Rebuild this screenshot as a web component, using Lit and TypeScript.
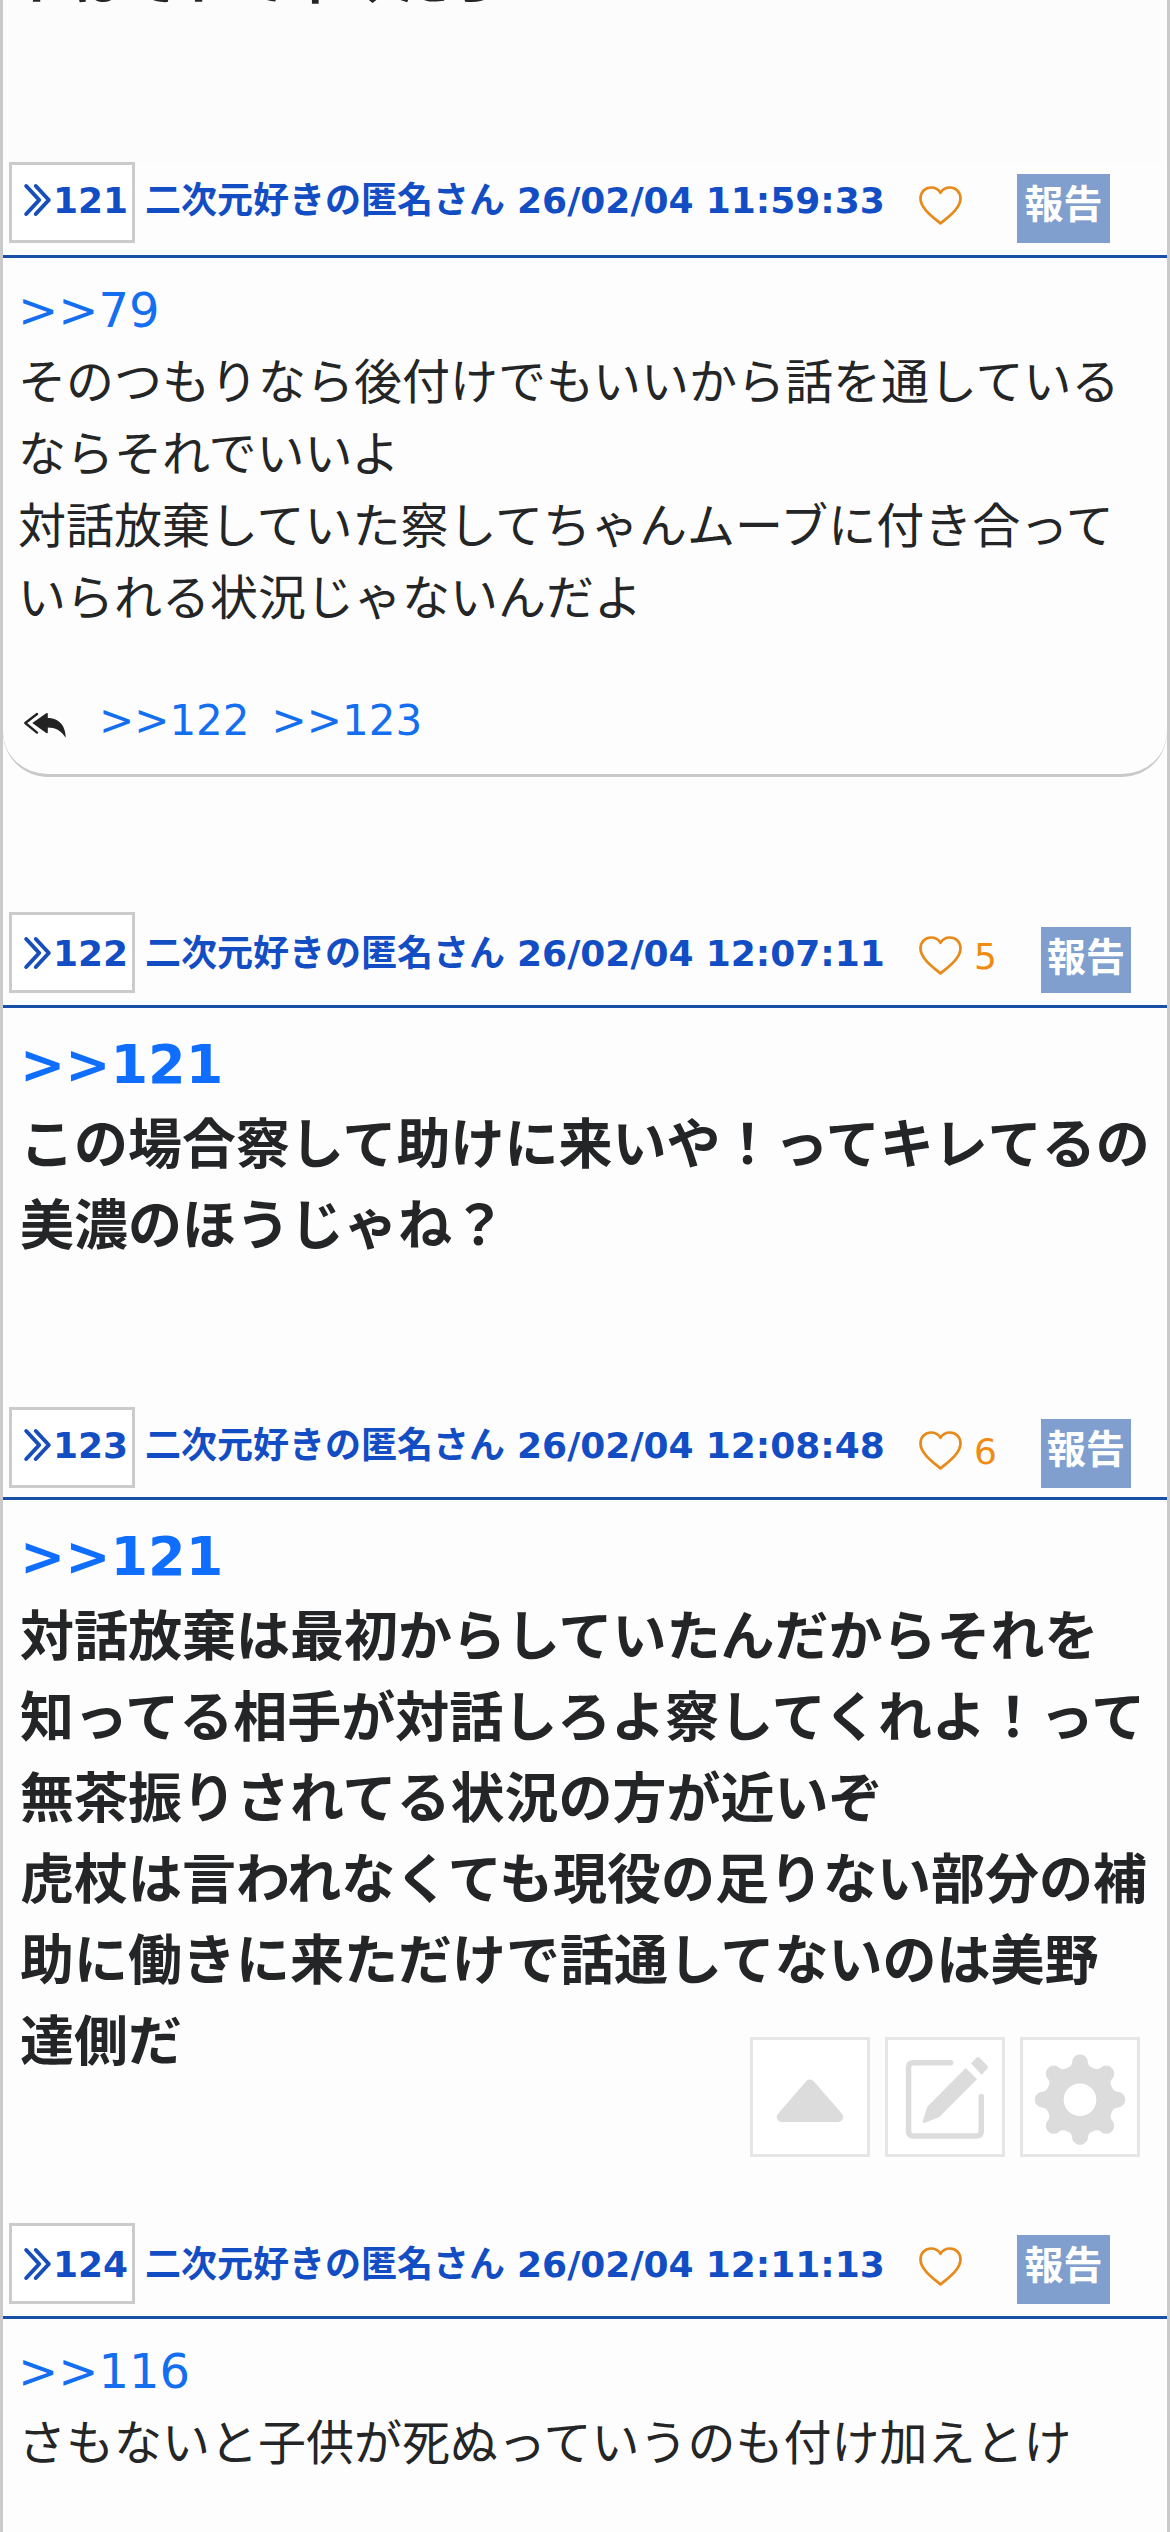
import { LitElement, html, css, svg, nothing } from "lit";
import { customElement, property } from "lit/decorators.js";

interface Post {
  no: number;
  date: string;
  likes?: number;
  quote: string;
  lines: string[];
  bold?: boolean;
  replies?: string[];
  variant: string;
}

const POSTS: Post[] = [
  {
    no: 121,
    date: "26/02/04 11:59:33",
    quote: ">>79",
    lines: [
      "そのつもりなら後付けでもいいから話を通している",
      "ならそれでいいよ",
      "対話放棄していた察してちゃんムーブに付き合って",
      "いられる状況じゃないんだよ",
    ],
    replies: [">>122", ">>123"],
    variant: "p121",
  },
  {
    no: 122,
    date: "26/02/04 12:07:11",
    likes: 5,
    quote: ">>121",
    lines: ["この場合察して助けに来いや！ってキレてるの", "美濃のほうじゃね？"],
    bold: true,
    variant: "p122",
  },
  {
    no: 123,
    date: "26/02/04 12:08:48",
    likes: 6,
    quote: ">>121",
    lines: [
      "対話放棄は最初からしていたんだからそれを",
      "知ってる相手が対話しろよ察してくれよ！って",
      "無茶振りされてる状況の方が近いぞ",
      "虎杖は言われなくても現役の足りない部分の補",
      "助に働きに来ただけで話通してないのは美野",
      "達側だ",
    ],
    bold: true,
    variant: "p123",
  },
  {
    no: 124,
    date: "26/02/04 12:11:13",
    quote: ">>116",
    lines: ["さもないと子供が死ぬっていうのも付け加えとけ"],
    variant: "p124",
  },
];

/** Eight-lobed gear outline centred on (60, 62.7). */
function gearPath(): string {
  const at = (k: number, x: number, y: number) => {
    const a = (k * Math.PI) / 4;
    const px = 60 + x * Math.cos(a) - y * Math.sin(a);
    const py = 62.7 + x * Math.sin(a) + y * Math.cos(a);
    return `${px.toFixed(2)} ${py.toFixed(2)}`;
  };
  let d = `M${at(0, -13.1, -31.6)}`;
  for (let k = 0; k < 8; k++) {
    d += `C${at(k, -9.9, -32.9)} ${at(k, -8.4, -34)} ${at(k, -8, -37.2)}`;
    d += `A8 8 0 0 1 ${at(k, 8, -37.2)}`;
    d += `C${at(k, 8.4, -34)} ${at(k, 9.9, -32.9)} ${at(k, 13.1, -31.6)}`;
  }
  return d + "ZM60 46.4a16.3 16.3 0 1 0 0 32.6a16.3 16.3 0 1 0 0-32.6Z";
}

@customElement("thread-post")
export class ThreadPost extends LitElement {
  @property({ attribute: false }) post!: Post;

  static styles = css`
    :host {
      display: block;
    }
    .head {
      display: flex;
      align-items: flex-start;
      box-sizing: border-box;
      height: 96px;
      padding-left: 6px;
      border-bottom: 3px solid #1a4fa8;
      color: #134dc4;
      font-size: 36px;
      font-weight: 700;
      line-height: 48px;
      white-space: nowrap;
    }
    .p123 .head {
      height: 93px;
    }
    .badge {
      display: flex;
      flex: none;
      align-items: flex-start;
      box-sizing: border-box;
      width: 126px;
      height: 81px;
      padding: 12px 0 0 5px;
      border: 3px solid #cbcbcb;
      background: #fff;
    }
    .chev {
      flex: none;
      width: 36px;
      height: 36px;
      margin-top: 5px;
    }
    .title {
      width: 748px;
      flex: none;
      margin-left: 10px;
      padding-top: 15px;
      word-spacing: -0.5px;
    }
    .p122 .badge,
    .p124 .badge {
      padding-top: 15px;
    }
    .p122 .title,
    .p124 .title {
      padding-top: 18px;
    }
    .heart {
      flex: none;
      width: 43px;
      height: 40px;
      margin-top: 24px;
      margin-left: 26px;
    }
    .count {
      flex: none;
      width: 24px;
      margin-left: 12px;
      padding-top: 21px;
      color: #ef8b12;
      font-weight: 400;
    }
    .report {
      flex: none;
      box-sizing: border-box;
      width: 93px;
      height: 69px;
      margin-top: 12px;
      margin-left: 55px;
      background: #809fce;
      color: #fff;
      font-size: 39px;
      line-height: 62px;
      text-align: center;
    }
    .p122 .report,
    .p123 .report {
      width: 90px;
      margin-left: 43px;
    }
    .p122 .report {
      height: 66px;
      margin-top: 15px;
    }
    .body {
      padding: 16px 0 0 15px;
      color: #232526;
      font-size: 48px;
      line-height: 72px;
      white-space: nowrap;
    }
    .bold {
      padding-top: 16px;
      padding-left: 17px;
      font-size: 54px;
      font-weight: 700;
      line-height: 81px;
    }
    .link {
      color: #146ff0;
    }
    .bold .link {
      color: #0f6efd;
    }
    .replies {
      display: flex;
      align-items: flex-start;
      height: 89px;
      margin-top: 51px;
      color: #146ff0;
      font-size: 42px;
    }
    .arrow {
      width: 48px;
      height: 36px;
      margin: 23px 30px 0 3px;
    }
    .reply {
      margin-right: 22px;
    }
    .p121 .body {
      margin-bottom: 135px;
      border-bottom: 3px solid #c9c9c9;
      border-radius: 0 0 45px 45px;
    }
    .p122 .body,
    .p123 .body {
      margin-bottom: 140px;
    }
  `;

  render() {
    const p = this.post;
    return html`
      <article class=${p.variant}>
        <header class="head">
          <div class="badge">
            <svg class="chev" viewBox="0 0 36 36" fill="none" stroke="#174eba" stroke-width="4" stroke-linecap="round" stroke-linejoin="round">
              <path d="M9.2 4L22.2 18L9.2 32M18.8 4L31.8 18L18.8 32" />
            </svg>
            <span>${p.no}</span>
          </div>
          <span class="title">二次元好きの匿名さん ${p.date}</span>
          <svg class="heart" viewBox="0 0 43 40" fill="none" stroke="#e68a1a" stroke-width="2.7" stroke-linejoin="round">
            <path d="M21.5 37.4C14.5 31.5 1.5 22.5 1.5 12.5C1.5 5.8 6.3 1.5 12 1.5C16.2 1.5 19.6 3.6 21.5 6.8C23.4 3.6 26.8 1.5 31 1.5C36.7 1.5 41.5 5.8 41.5 12.5C41.5 22.5 28.5 31.5 21.5 37.4Z" />
          </svg>
          ${p.likes ? html`<span class="count">${p.likes}</span>` : nothing}
          <span class="report">報告</span>
        </header>
        <div class="body ${p.bold ? "bold" : ""}">
          <div class="link">${p.quote}</div>
          ${p.lines.map((l) => html`<div>${l}</div>`)}
          ${p.replies
            ? html`<div class="replies">
                <svg class="arrow" viewBox="0 0 48 36">
                  <path d="M16 6L4.3 15L16 24.6" fill="none" stroke="#222" stroke-width="2.4" stroke-linecap="round" stroke-linejoin="round" />
                  <path d="M11.3 15L25.2 5.2Q26.8 4.4 26.8 6V10C35 10 44.5 15 44.7 29.7C40 22 34 19.6 26.8 19.4V24.2Q26.8 26 25.2 25Z" fill="#222" />
                </svg>
                ${p.replies.map((r) => html`<span class="reply">${r}</span>`)}
              </div>`
            : nothing}
        </div>
      </article>
    `;
  }
}

@customElement("app-root")
export class AppRoot extends LitElement {
  static styles = css`
    :host {
      display: block;
      position: relative;
      box-sizing: border-box;
      width: 1170px;
      height: 2532px;
      overflow: hidden;
      border: solid #cacaca;
      border-width: 0 3px;
      background: #fdfdfd;
      font-family: "DejaVu Sans", "Noto Sans CJK JP", sans-serif;
    }
    .previous {
      height: 162px;
      padding-left: 17px;
      overflow: hidden;
      box-sizing: border-box;
      color: #232526;
      font-size: 54px;
      font-weight: 700;
      line-height: 81px;
      background: #fcfcfc;
    }
    .tail {
      margin-top: -60px;
    }
    .tools {
      position: absolute;
      top: 2037px;
      right: 27px;
      display: flex;
      gap: 15px;
    }
    .tool {
      box-sizing: border-box;
      width: 120px;
      height: 120px;
      border: 3px solid #e6e6e6;
      background: #fff;
    }
    .tool svg {
      display: block;
      margin: -3px;
      width: 120px;
      height: 120px;
    }
  `;

  private tool(content: unknown) {
    return html`<div class="tool"><svg viewBox="0 0 120 120">${content}</svg></div>`;
  }

  render() {
    return html`
      <div class="previous"><div class="tail">ればそれで早けだろ</div></div>
      ${POSTS.map((p) => html`<thread-post .post=${p}></thread-post>`)}
      <div class="tools">
        ${this.tool(svg`<path d="M60 47.5L31.8 80H88.2Z" fill="#dcdcdc" stroke="#dcdcdc" stroke-width="10" stroke-linejoin="round"/>`)}
        ${this.tool(svg`
          <path d="M65.6 25.8H28.5Q23.5 25.8 23.5 30.8V94Q23.5 99 28.5 99H91.3Q96.3 99 96.3 94V59.5" fill="none" stroke="#dcdcdc" stroke-width="5.5" stroke-linecap="round"/>
          <path d="M80.7 31L92 42.3L54 80.3L39.5 86Q37.2 86.4 37.8 84L42.3 69.7Z" fill="#dcdcdc"/>
          <path d="M86 26.2L91.5 20.7Q93 19.2 94.5 20.7L102.2 28.6Q103.7 30.3 102.2 31.9L96.6 37.8Z" fill="#dcdcdc"/>`)}
        ${this.tool(svg`<path d=${gearPath()} fill="#dcdcdc" fill-rule="evenodd"/>`)}
      </div>
    `;
  }
}
